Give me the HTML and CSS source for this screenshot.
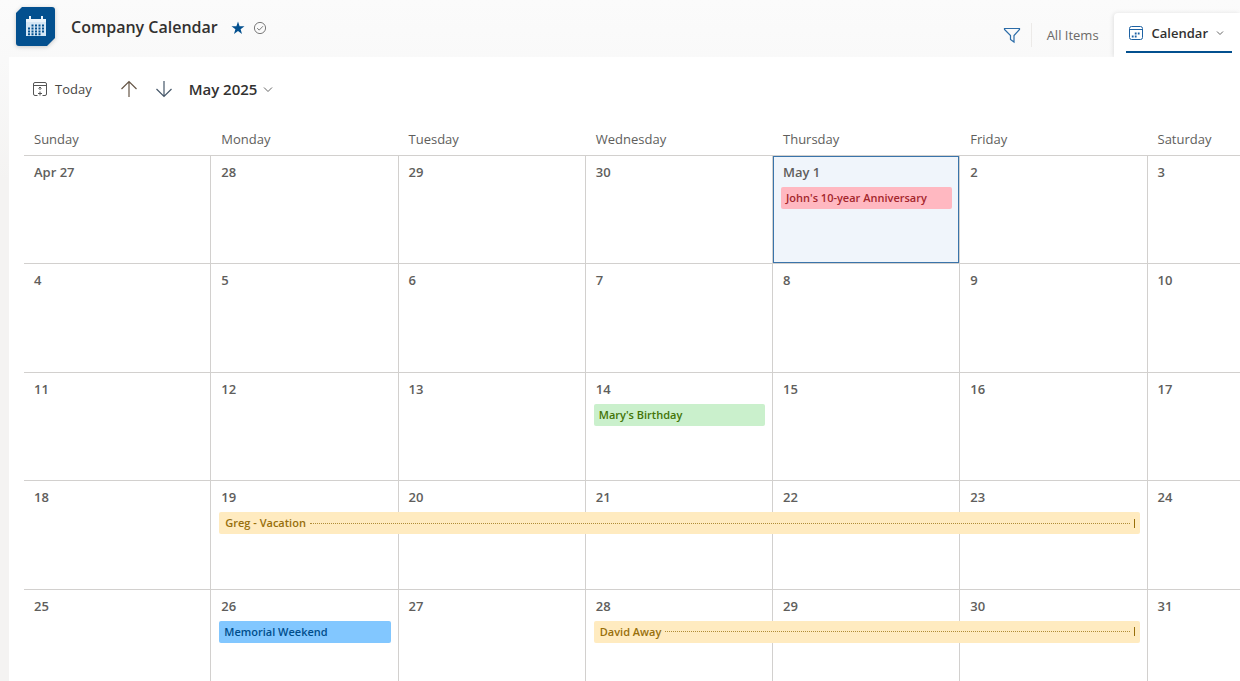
FILE: index.html
```html
<!DOCTYPE html>
<html lang="en">

<head>
    <meta charset="UTF-8">
    <meta name="viewport" content="width=device-width, initial-scale=1.0">
    <title>Company Calendar</title>
    <link rel="stylesheet" href="styles.css">
</head>

<body>
    <header class="list-header">
        <div class="list-title">
            <svg class="list-logo" width="40" height="40" viewBox="0 0 40 40" aria-hidden="true">
                <path fill="#03508f" d="M6 1H36a3 3 0 0 1 3 3V32L31 40H3a3 3 0 0 1-3-3V7Z" />
                <path fill="#eaf3fa" d="M10 13h20v4H10zM13 10h2v4h-2zM25 10h2v4h-2z" />
                <path fill="#d5e7f5" d="M10 16h20v14H10z" />
                <path stroke="#03508f" stroke-width="2" stroke-dasharray="2 1.500" d="M15.500 19.500h12.500M12 22.500h16M12 25.500h16M12 28.300h12.500" />
            </svg>
            <h1>Company Calendar</h1>
            <button class="icon-button" aria-label="Favorite">
                <svg width="14" height="14" viewBox="0 0 14 14">
                    <path fill="#03508f" d="M7 .5 8.600 5.200H13.500L9.600 8.200 11 13 7 10.100 3 13 4.400 8.200.5 5.200H5.400Z" />
                </svg>
            </button>
            <button class="icon-button" aria-label="Status">
                <svg width="14" height="14" viewBox="0 0 14 14" fill="none" stroke="#7a7a7a">
                    <circle cx="7" cy="7" r="5.600" />
                    <path d="M4.200 7.200 6.200 9.100 10 5.200" />
                </svg>
            </button>
        </div>
        <nav class="views">
            <button class="filter" aria-label="Filter">
                <svg width="18" height="18" viewBox="0 0 18 18" fill="none" stroke="#2b6ca8" stroke-width="1.200">
                    <path d="M1.500 2.500H16.500V3.500L11 9.500V16L7.500 13.500V9.500L1.500 3.500Z" />
                </svg>
            </button>
            <a class="view" href="#">All Items</a>
            <div class="tab">
                <a class="view active" href="#">
                    <svg width="16" height="16" viewBox="0 0 16 16" fill="none" stroke="#1e62a3">
                        <rect x="1.500" y="1.500" width="13" height="13" rx="2" />
                        <path d="M1.500 4.500h13" />
                        <path stroke-width="1.800" stroke-dasharray="1.800 1.200" d="M6.800 8.500h6M3.800 11.500h6" />
                    </svg>
                    Calendar
                    <svg width="8" height="8" viewBox="0 0 8 8" fill="none" stroke="#666">
                        <path d="M1 2.500 4 5.500 7 2.500" />
                    </svg>
                </a>
            </div>
        </nav>
    </header>

    <main class="calendar">
        <div class="toolbar">
            <button class="today">
                <svg width="16" height="16" viewBox="0 0 16 16" fill="none" stroke="#555">
                    <path d="M5.500 14.500H3a1.500 1.500 0 0 1-1.500-1.500V3A1.500 1.500 0 0 1 3 1.500H13A1.500 1.500 0 0 1 14.500 3V13a1.500 1.500 0 0 1-1.500 1.500H10.500M1.500 4.500h13" />
                    <path d="M8 6v3M6.500 7.500 8 6 9.500 7.500M8 10.500v4M6 12.500H10" />
                </svg>
                Today
            </button>
            <button class="arrow" aria-label="Previous month">
                <svg width="18" height="18" viewBox="0 0 18 18" fill="none" stroke="#665647" stroke-width="1.200">
                    <path d="M9 17V1.500M1.500 9 9 1.500 16.500 9" />
                </svg>
            </button>
            <button class="arrow" aria-label="Next month">
                <svg width="18" height="18" viewBox="0 0 18 18" fill="none" stroke="#47586a" stroke-width="1.200">
                    <path d="M9 1V16.500M1.500 9 9 16.500 16.500 9" />
                </svg>
            </button>
            <button class="month">
                May 2025
                <svg width="10" height="10" viewBox="0 0 10 10" fill="none" stroke="#666">
                    <path d="M1 3.500 5 7.500 9 3.500" />
                </svg>
            </button>
        </div>

        <table class="month-grid">
            <colgroup>
                <col class="day" span="6">
                <col>
            </colgroup>
            <thead>
                <tr>
                    <th>Sunday</th>
                    <th>Monday</th>
                    <th>Tuesday</th>
                    <th>Wednesday</th>
                    <th>Thursday</th>
                    <th>Friday</th>
                    <th>Saturday</th>
                </tr>
            </thead>
            <tbody>
                <tr>
                    <td>Apr 27</td>
                    <td>28</td>
                    <td>29</td>
                    <td>30</td>
                    <td class="selected">May 1
                        <div class="event red">John's 10-year Anniversary</div>
                    </td>
                    <td>2</td>
                    <td>3</td>
                </tr>
                <tr>
                    <td>4</td>
                    <td>5</td>
                    <td>6</td>
                    <td>7</td>
                    <td>8</td>
                    <td>9</td>
                    <td>10</td>
                </tr>
                <tr>
                    <td>11</td>
                    <td>12</td>
                    <td>13</td>
                    <td>14
                        <div class="event green">Mary's Birthday</div>
                    </td>
                    <td>15</td>
                    <td>16</td>
                    <td>17</td>
                </tr>
                <tr>
                    <td>18</td>
                    <td>19
                        <div class="event yellow days-5">Greg - Vacation</div>
                    </td>
                    <td>20</td>
                    <td>21</td>
                    <td>22</td>
                    <td>23</td>
                    <td>24</td>
                </tr>
                <tr>
                    <td>25</td>
                    <td>26
                        <div class="event blue">Memorial Weekend</div>
                    </td>
                    <td>27</td>
                    <td>28
                        <div class="event yellow days-3">David Away</div>
                    </td>
                    <td>29</td>
                    <td>30</td>
                    <td>31</td>
                </tr>
            </tbody>
        </table>
    </main>
</body>

</html>
```
FILE: styles.css
```css
* {
    box-sizing: border-box;
}

body {
    margin: 0;
    height: 100vh;
    overflow: hidden;
    background: linear-gradient(#fbfbfb, #f9f9f9 60px, #f4f3f2 180px);
    color: #323130;
    font-family: "Open Sans", "Noto Sans", sans-serif;
    font-size: 13px;
}

button {
    display: flex;
    align-items: center;
    padding: 0;
    border: none;
    background: none;
    color: inherit;
    font: inherit;
}

svg {
    display: block;
    flex: none;
}

.list-header {
    display: flex;
    justify-content: space-between;
    height: 57px;
    padding-left: 16px;
}

.list-title {
    display: flex;
    align-items: center;
    height: 56px;
    gap: 8px;
}

.list-logo {
    margin-bottom: 4px;
    filter: drop-shadow(0 1px 2px rgba(0, 0, 0, 0.2));
}

h1 {
    margin: 0 5px 2px 7px;
    font-size: 16px;
    font-weight: 600;
}

.views {
    display: flex;
    align-items: flex-end;
}

.filter {
    height: 24px;
    margin-bottom: 10px;
    padding-right: 10px;
    border-right: 1px solid #eceae8;
}

.view {
    display: flex;
    align-items: center;
    height: 44px;
    padding: 0 15px;
    color: #6b6967;
    text-decoration: none;
}

.tab {
    height: 44px;
    padding: 0 8px 0 12px;
    border-top-left-radius: 4px;
    background: #fff;
    box-shadow: -1px 0 4px rgba(0, 0, 0, 0.1);
}

.view.active {
    height: 40px;
    gap: 8px;
    padding: 2px 8px 0 2px;
    border-bottom: 2px solid #03508f;
    color: #323130;
    font-weight: 600;
}

.calendar {
    position: relative;
    margin-left: 9px;
    padding: 15px 0 0 15px;
    background: #fff;
}

.toolbar {
    display: flex;
    align-items: center;
    height: 34px;
    padding-left: 8px;
}

.today {
    gap: 7px;
    margin-right: 28px;
    color: #484644;
}

.arrow {
    margin-right: 17px;
}

.month {
    gap: 6px;
    margin-left: -1px;
    font-size: 15px;
    font-weight: 600;
}

.month-grid {
    width: 100%;
    height: 575px;
    margin-top: 17px;
    table-layout: fixed;
    border-spacing: 0;
}

/* six full days, the last one gets half a column */
.day {
    width: 15.4%;
}

th {
    height: 33px;
    padding: 0 10px;
    border-bottom: 1px solid #d2d0ce;
    color: #605e5c;
    font-weight: 400;
    text-align: left;
}

td {
    height: 108px;
    padding: 7px 7px 0 8px;
    border-right: 1px solid #d2d0ce;
    border-bottom: 1px solid #d2d0ce;
    color: #605e5c;
    font-weight: 600;
    line-height: 18px;
    text-indent: 2px;
    vertical-align: top;
}

td:last-child {
    border-right: none;
}

.selected {
    background: #f0f5fb;
    box-shadow: inset 0 0 0 1px #3a74aa;
}

.event {
    position: relative;
    z-index: 1;
    display: flex;
    align-items: center;
    height: 22px;
    margin-top: 6px;
    padding: 0 5px;
    border-radius: 2px;
    font-size: 11px;
    text-indent: 0;
    white-space: nowrap;
}

.red {
    background: #ffb8c1;
    color: #a4262c;
}

.green {
    background: #caf0cc;
    color: #437406;
}

.blue {
    background: #82c7ff;
    color: #004e8c;
}

.yellow {
    gap: 4px;
    padding: 0 5px 0 6px;
    background: #ffebc0;
    color: #986f0b;
}

/* dotted line and end mark of an event that runs over several days */
.yellow::before {
    content: "";
    order: 1;
    flex: 1;
    border-top: 1px dotted #b08c35;
}

.yellow::after {
    content: "";
    order: 2;
    height: 9px;
    border-right: 1px solid #986f0b;
}

/* each extra day adds one cell: its content plus 16px of padding and border */
.days-5 {
    width: calc(500% + 64px);
}

.days-3 {
    width: calc(300% + 32px);
}
```
